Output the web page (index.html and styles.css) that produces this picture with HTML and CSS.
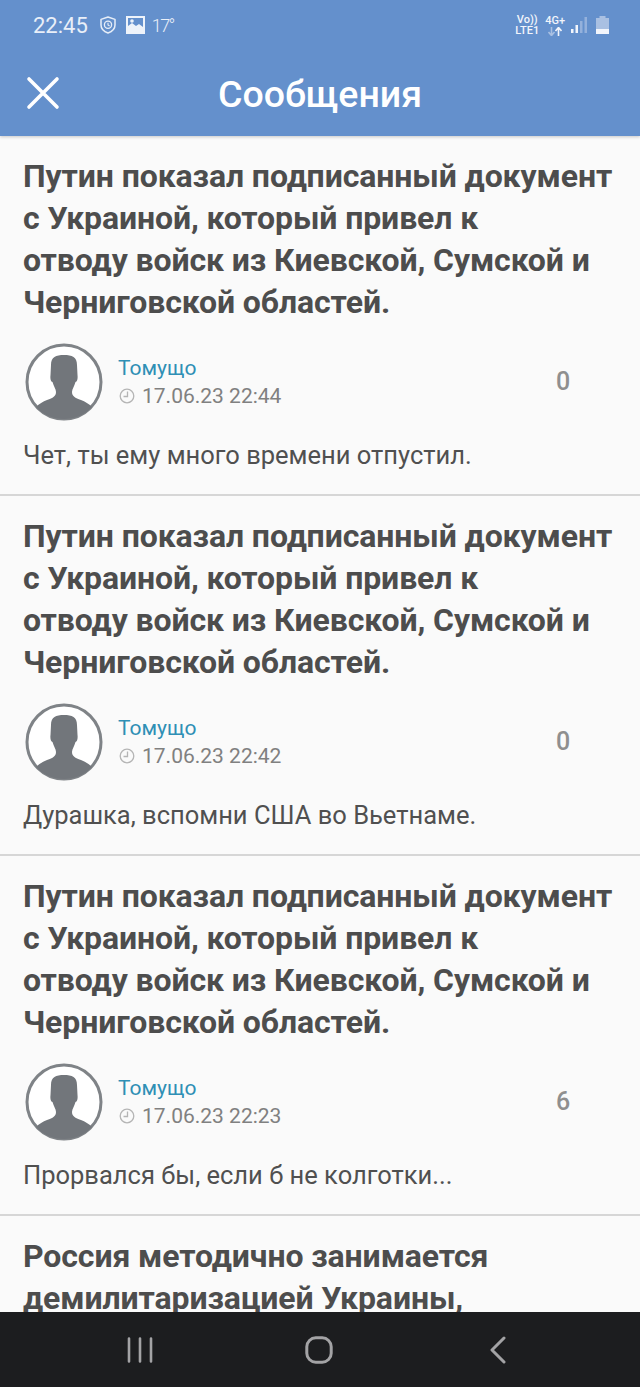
FILE: index.html
```html
<!DOCTYPE html>
<html lang="ru">
<head>
    <meta charset="UTF-8">
    <meta name="viewport" content="width=device-width, initial-scale=1.0">
    <title>Сообщения</title>
    <link rel="stylesheet" href="styles.css">
</head>
<body>
    <div id="app">
        <!-- Status bar + toolbar -->
        <header class="top">
            <div class="status-bar">
                <span class="time">22:45</span>
                <svg class="st-shield" width="16" height="18" viewBox="0 0 16 18"><path d="M8 1 L15 3.4 V9 C15 13 12 15.6 8 17 C4 15.6 1 13 1 9 V3.4 Z" fill="none" stroke="#e6edf7" stroke-width="1.5" stroke-linejoin="round"/><circle cx="8" cy="8.8" r="3.6" fill="none" stroke="#e6edf7" stroke-width="1.3"/><path d="M8 6.8 V9 L9.6 10" fill="none" stroke="#e6edf7" stroke-width="1.1"/></svg>
                <svg class="st-image" width="19" height="18" viewBox="0 0 19 18"><path fill-rule="evenodd" d="M0 0 H19 V18 H0 Z M2 2 V10 L6 7 L10 10 L13 8 L17 11 V2 Z" fill="#eef3fa"/><circle cx="6" cy="5" r="1.8" fill="#eef3fa"/></svg>
                <span class="temp">17°</span>
                <div class="st-right">
                    <div class="st-net"><span>Vo))</span><span>LTE1</span></div>
                    <div class="st-net st-4g"><span>4G+</span>
                        <svg width="14" height="9" viewBox="0 0 14 9"><path d="M3.500 0 V8 M0.500 5 L3.500 8.500 L6.500 5" fill="none" stroke="#a9c0e2" stroke-width="1.600"/><path d="M10.500 9 V1 M7.500 4 L10.500 0.500 L13.500 4" fill="none" stroke="#f2f5fb" stroke-width="1.600"/></svg>
                    </div>
                    <svg width="16" height="18" viewBox="0 0 16 18"><rect x="0" y="13" width="2.500" height="4" fill="#f2f5fb"/><rect x="4.500" y="9" width="2.500" height="8" fill="#f2f5fb"/><rect x="9" y="5" width="2.500" height="12" fill="#94b1dc"/><rect x="13.500" y="1" width="2.500" height="16" fill="#94b1dc"/></svg>
                    <svg class="st-batt" width="13" height="19" viewBox="0 0 13 19"><rect x="3.500" y="0" width="6" height="2" fill="#a9c0e2"/><rect x="0" y="2" width="13" height="11" fill="#a9c0e2"/><rect x="0" y="13" width="13" height="5" fill="#f2f5fb"/></svg>
                </div>
            </div>
            <div class="toolbar">
                <svg class="close" width="34" height="34" viewBox="0 0 34 34"><path d="M3 3 L31 31 M31 3 L3 31" stroke="#fff" stroke-width="3.600" stroke-linecap="round"/></svg>
                <h1>Сообщения</h1>
            </div>
        </header>

        <!-- Message list -->
        <ul id="message-list">
            <li class="message">
                <h2>Путин показал подписанный документ с Украиной, который привел к<br>отводу войск из Киевской, Сумской и Черниговской областей.</h2>
                <div class="meta">
                    <svg class="avatar" viewBox="0 0 78 78"><use href="#avatar-icon"/></svg>
                    <div class="who">
                        <a href="#">Томущо</a>
                        <div class="date"><svg width="16" height="16" viewBox="0 0 16 16"><use href="#clock-icon"/></svg>17.06.23 22:44</div>
                    </div>
                    <span class="count">0</span>
                </div>
                <p>Чет, ты ему много времени отпустил.</p>
            </li>
            <li class="message">
                <h2>Путин показал подписанный документ с Украиной, который привел к<br>отводу войск из Киевской, Сумской и Черниговской областей.</h2>
                <div class="meta">
                    <svg class="avatar" viewBox="0 0 78 78"><use href="#avatar-icon"/></svg>
                    <div class="who">
                        <a href="#">Томущо</a>
                        <div class="date"><svg width="16" height="16" viewBox="0 0 16 16"><use href="#clock-icon"/></svg>17.06.23 22:42</div>
                    </div>
                    <span class="count">0</span>
                </div>
                <p>Дурашка, вспомни США во Вьетнаме.</p>
            </li>
            <li class="message">
                <h2>Путин показал подписанный документ с Украиной, который привел к<br>отводу войск из Киевской, Сумской и Черниговской областей.</h2>
                <div class="meta">
                    <svg class="avatar" viewBox="0 0 78 78"><use href="#avatar-icon"/></svg>
                    <div class="who">
                        <a href="#">Томущо</a>
                        <div class="date"><svg width="16" height="16" viewBox="0 0 16 16"><use href="#clock-icon"/></svg>17.06.23 22:23</div>
                    </div>
                    <span class="count">6</span>
                </div>
                <p>Прорвался бы, если б не колготки...</p>
            </li>
            <li class="message">
                <h2>Россия методично занимается демилитаризацией Украины,</h2>
            </li>
        </ul>

        <!-- Android nav bar -->
        <nav class="navbar">
            <svg width="26" height="26" viewBox="0 0 26 26"><path d="M2 1.500 V24.500 M13 1.500 V24.500 M24 1.500 V24.500" stroke="#a3a3a5" stroke-width="2.600" stroke-linecap="round"/></svg>
            <svg class="nav-home" width="28" height="28" viewBox="0 0 28 28"><rect x="1.800" y="1.800" width="24.400" height="24.400" rx="9" fill="none" stroke="#a3a3a5" stroke-width="3"/></svg>
            <svg class="nav-back" width="18" height="28" viewBox="0 0 18 28"><path d="M15 2 L3 14 L15 26" fill="none" stroke="#a3a3a5" stroke-width="3" stroke-linecap="round" stroke-linejoin="round"/></svg>
        </nav>
    </div>

    <!-- Shared icons -->
    <svg class="defs" width="0" height="0">
        <defs>
            <g id="avatar-icon">
                <circle cx="39" cy="39" r="37" fill="#fff" stroke="#7f8387" stroke-width="3"/>
                <path d="M26 22 C26 14 31 12 39 12 C47 12 52 14 52 22 L52.500 32 C53 36 52 39 50.500 39 C49.500 43 47 46 47 49 C47 53 50 55 56 57 C60 58.500 64 61 67 64 C60 72 50 76 39 76 C28 76 18 72 11 64 C14 61 18 58.500 22 57 C28 55 31 53 31 49 C31 46 28.500 43 27.500 39 C26 39 25 36 25.500 32 Z" fill="#72767b"/>
            </g>
            <g id="clock-icon">
                <circle cx="8" cy="8" r="6.800" fill="none" stroke="#b5b5b5" stroke-width="1.300"/>
                <path d="M8.500 3.500 V8.500 H4.500" fill="none" stroke="#b5b5b5" stroke-width="1.300"/>
            </g>
        </defs>
    </svg>
</body>
</html>
```

FILE: styles.css
```css
html, body {
    margin: 0;
    padding: 0;
    height: 100%;
}
body {
    font-family: Roboto, "Liberation Sans", sans-serif;
    background-color: #fafafa;
    color: #4d4d4d;
}
#app {
    height: 100vh;
    display: flex;
    flex-direction: column;
    overflow: hidden;
}
.defs {
    position: absolute;
}
.top {
    height: 136px;
    flex: none;
    background-color: #6490cc;
    color: #fff;
    box-shadow: 0 1px 3px rgba(0,0,0,0.2);
    position: relative;
}
.status-bar {
    height: 50px;
    display: flex;
    align-items: center;
    padding: 0 31px 0 33px;
    color: #e9eff8;
}
.time {
    font-size: 22px;
    margin-right: 11px;
}
.st-shield {
    margin-left: 1px;
}
.st-image {
    margin: 0 7px 0 10px;
}
.temp {
    font-size: 18px;
    font-weight: 300;
    letter-spacing: -1.600px;
}
.st-right {
    margin-left: auto;
    display: flex;
    align-items: center;
    gap: 6px;
}
.st-net {
    display: flex;
    flex-direction: column;
    align-items: center;
    font-size: 11px;
    font-weight: 500;
    line-height: 11px;
    color: #f2f5fb;
}
.st-4g svg {
    margin-top: 1px;
}
.st-batt {
    margin-left: 3px;
}
.toolbar {
    height: 86px;
    display: flex;
    align-items: center;
    justify-content: center;
    position: relative;
}
.toolbar h1 {
    margin: 2px 0 0 0;
    font-size: 37.500px;
    font-weight: 500;
    color: #fff;
}
.close {
    position: absolute;
    left: 26px;
    top: 26px;
}
#message-list {
    flex: 1;
    min-height: 0;
    list-style: none;
    margin: 0;
    padding: 0;
    overflow: hidden;
}
.message {
    height: 360px;
    box-sizing: border-box;
    padding: 19px 23px 0;
    border-bottom: 2px solid #d6d6d6;
}
.message h2 {
    margin: 0;
    font-size: 32px;
    line-height: 42px;
    font-weight: 700;
    letter-spacing: -0.100px;
    color: #4d4d4d;
}
.meta {
    display: flex;
    align-items: center;
    margin-top: 20px;
}
.avatar {
    width: 78px;
    height: 78px;
    margin-left: 2px;
    flex: none;
}
.who {
    margin-left: 15px;
    width: 400px;
}
.who a {
    display: block;
    font-size: 21px;
    line-height: 28px;
    color: #2f8fb5;
    text-decoration: none;
}
.date {
    display: flex;
    align-items: center;
    gap: 7px;
    padding-left: 1px;
    font-size: 21px;
    line-height: 28px;
    color: #808080;
}
.count {
    width: 58px;
    margin: 0 0 2px 16px;
    text-align: center;
    font-size: 25px;
    font-weight: 500;
    color: #8f8f8f;
}
.message p {
    margin: 18px 0 0;
    font-size: 25.500px;
    line-height: 32px;
    color: #505050;
}
.navbar {
    height: 75px;
    flex: none;
    background-color: #1c1d1f;
    display: flex;
    align-items: center;
    padding-left: 127px;
}
.nav-home {
    margin-left: 152px;
}
.nav-back {
    margin-left: 156px;
}
```
